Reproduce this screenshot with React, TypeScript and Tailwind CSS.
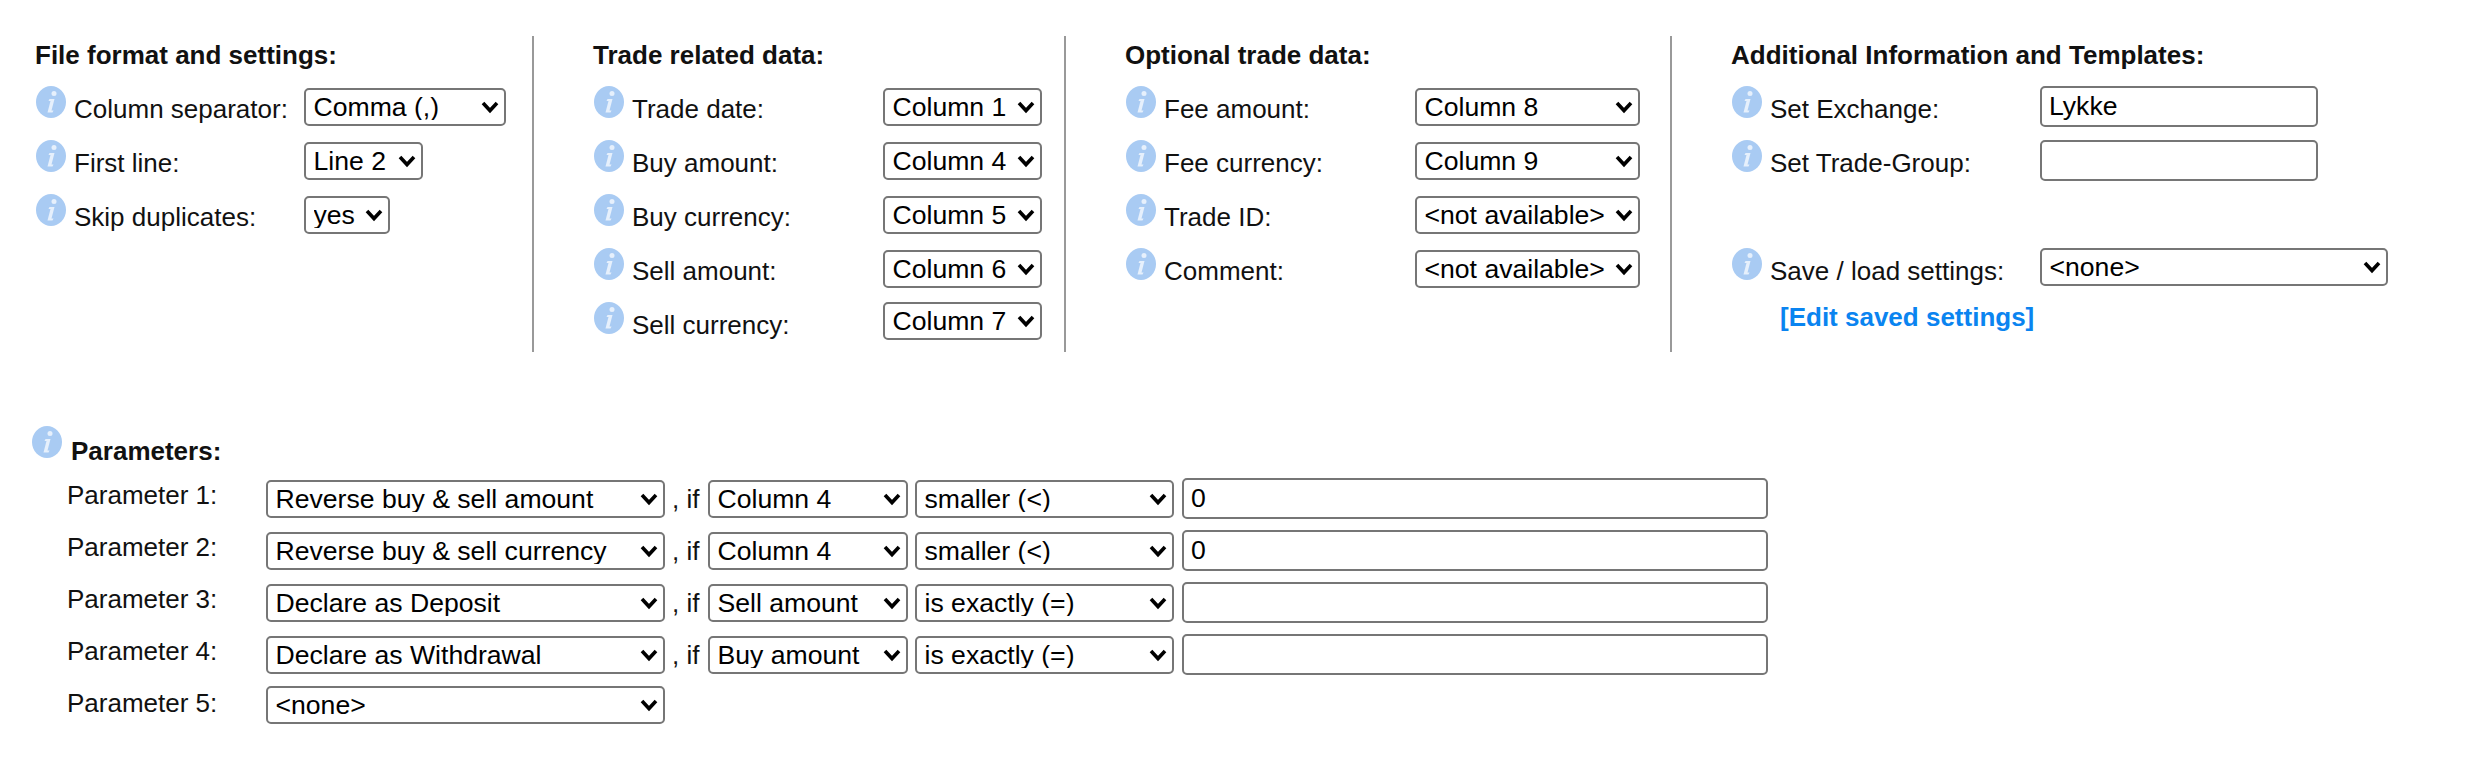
const font = "font-['Liberation_Sans',Arial,sans-serif]";

function InfoIcon() {
  return (
    <svg width="32" height="34" viewBox="0 0 32 34" className="shrink-0">
      <defs>
        <filter id="soft">
          <feGaussianBlur stdDeviation="0.6" />
        </filter>
      </defs>
      <ellipse cx="16" cy="16" rx="15" ry="16" fill="#a9cbf3" filter="url(#soft)" />
      <g fill="#e6f0fc" filter="url(#soft)">
        <ellipse cx="19" cy="7.5" rx="2.5" ry="2.5" />
        <path d="M14.5 13h5l-3 11.5h2l-1 2h-5l3-11.5h-2z" />
      </g>
    </svg>
  );
}

function Select({ value, className }: { value: string; className: string }) {
  return (
    <div className={`relative h-[38px] shrink-0 ${className}`}>
      <select
        defaultValue={value}
        className="h-full w-full appearance-none rounded-[5px] border-2 border-[#767676] bg-white pl-[7.5px] text-[26.6px] leading-none text-black outline-none"
      >
        <option>{value}</option>
      </select>
      <svg width="18" height="14" viewBox="0 0 18 14" className="pointer-events-none absolute right-[7px] top-[12px]">
        <path d="M2 3l7 7.5 7-7.5" fill="none" stroke="#000" strokeWidth="3.6" />
      </svg>
    </div>
  );
}

function TextInput({ value, className }: { value: string; className: string }) {
  return (
    <input
      readOnly
      value={value}
      className={`h-[41px] shrink-0 rounded-[5px] border-2 border-[#767676] bg-white px-[7px] text-[26.6px] text-black outline-none ${className}`}
    />
  );
}

function Row({
  label,
  labelWidth,
  flush,
  children,
}: {
  label: string;
  labelWidth: string;
  flush?: boolean;
  children: React.ReactNode;
}) {
  return (
    <div className="flex h-[54px] items-start">
      <div className={`flex shrink-0 items-start gap-[7px] ${labelWidth}`}>
        <InfoIcon />
        <span className="mt-[9px] whitespace-nowrap text-[26px] leading-[28px] text-[#111]">{label}</span>
      </div>
      <div className={flush ? "" : "pt-[2px]"}>{children}</div>
    </div>
  );
}

function Heading({ children }: { children: React.ReactNode }) {
  return <h2 className="mb-[17px] mt-[5px] h-[28px] text-[26px] font-bold leading-[28px] text-[#111]">{children}</h2>;
}

const trade = [
  ["Trade date:", "Column 1"],
  ["Buy amount:", "Column 4"],
  ["Buy currency:", "Column 5"],
  ["Sell amount:", "Column 6"],
  ["Sell currency:", "Column 7"],
];

const optional = [
  ["Fee amount:", "Column 8"],
  ["Fee currency:", "Column 9"],
  ["Trade ID:", "<not available>"],
  ["Comment:", "<not available>"],
];

const params = [
  ["Parameter 1:", "Reverse buy & sell amount", "Column 4", "smaller (<)", "0"],
  ["Parameter 2:", "Reverse buy & sell currency", "Column 4", "smaller (<)", "0"],
  ["Parameter 3:", "Declare as Deposit", "Sell amount", "is exactly (=)", ""],
  ["Parameter 4:", "Declare as Withdrawal", "Buy amount", "is exactly (=)", ""],
];

export default function App() {
  return (
    <div className={`${font} h-[768px] w-[2474px] overflow-hidden bg-white pt-[36px]`}>
      <div className="flex h-[316px]">
        <section className="w-[534px] shrink-0 border-r-2 border-[#999] pl-[35px]">
          <Heading>File format and settings:</Heading>
          <Row label="Column separator:" labelWidth="w-[269px]">
            <Select value="Comma (,)" className="w-[202px]" />
          </Row>
          <Row label="First line:" labelWidth="w-[269px]">
            <Select value="Line 2" className="w-[119px]" />
          </Row>
          <Row label="Skip duplicates:" labelWidth="w-[269px]">
            <Select value="yes" className="w-[86px]" />
          </Row>
        </section>
        <section className="w-[532px] shrink-0 border-r-2 border-[#999] pl-[59px]">
          <Heading>Trade related data:</Heading>
          {trade.map(([label, value], i) => (
            <Row key={label} label={label} labelWidth="w-[290px]" flush={i === 4}>
              <Select value={value} className="w-[159px]" />
            </Row>
          ))}
        </section>
        <section className="w-[606px] shrink-0 border-r-2 border-[#999] pl-[59px]">
          <Heading>Optional trade data:</Heading>
          {optional.map(([label, value]) => (
            <Row key={label} label={label} labelWidth="w-[290px]">
              <Select value={value} className="w-[225px]" />
            </Row>
          ))}
        </section>
        <section className="pl-[59px]">
          <Heading>Additional Information and Templates:</Heading>
          <Row label="Set Exchange:" labelWidth="w-[309px]" flush>
            <TextInput value="Lykke" className="w-[278px]" />
          </Row>
          <Row label="Set Trade-Group:" labelWidth="w-[309px]" flush>
            <TextInput value="" className="w-[278px]" />
          </Row>
          <div className="h-[54px]" />
          <Row label="Save / load settings:" labelWidth="w-[309px]" flush>
            <Select value="<none>" className="w-[348px]" />
          </Row>
          <a className="ml-[49px] mt-[1px] block text-[26px] font-bold leading-[28px] text-[#0a84f0]">[Edit saved settings]</a>
        </section>
      </div>

      <div className="mt-[74px] pl-[31px]">
        <div className="flex items-start gap-[8px]">
          <InfoIcon />
          <h2 className="mt-[11px] text-[26px] font-bold leading-[28px] text-[#111]">Parameters:</h2>
        </div>
        <div className="ml-[36px] mt-[13px]">
          {params.map(([label, action, column, op, value]) => (
            <div key={label} className="flex h-[52px] items-start">
              <span className="mt-[3px] w-[199px] shrink-0 text-[26px] leading-[28px] text-[#111]">{label}</span>
              <Select value={action} className="mt-[2px] w-[399px]" />
              <span className="mx-[7px] mt-[7px] w-[29px] whitespace-nowrap text-[26px] leading-[28px] text-[#111]">, if</span>
              <Select value={column} className="mt-[2px] w-[200px]" />
              <Select value={op} className="ml-[7px] mt-[2px] w-[259px]" />
              <TextInput value={value} className="ml-[8px] w-[586px]" />
            </div>
          ))}
          <div className="flex items-start">
            <span className="mt-[3px] w-[199px] shrink-0 text-[26px] leading-[28px] text-[#111]">Parameter 5:</span>
            <Select value="<none>" className="w-[399px]" />
          </div>
        </div>
      </div>
    </div>
  );
}
